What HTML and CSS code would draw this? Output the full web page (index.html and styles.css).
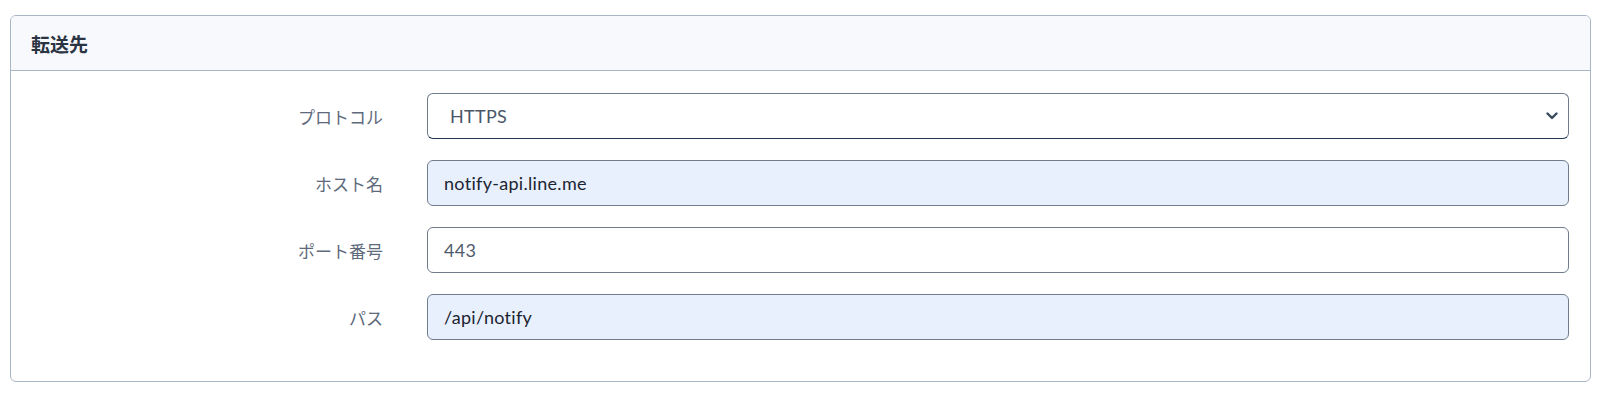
FILE: index.html
```html
<!DOCTYPE html>
<html lang="ja">
<head>
<meta charset="utf-8">
<link rel="stylesheet" href="styles.css">
</head>
<body>
<section class="card">
  <header class="card-header">転送先</header>
  <div class="card-body">
    <div class="row">
      <label class="label">プロトコル</label>
      <div class="select">
        <span class="select-value">HTTPS</span>
        <svg class="chev" width="12" height="8" viewBox="0 0 12 8"><path d="M1.5 1.5 L6 6 L10.5 1.5" fill="none" stroke="#3a4a5c" stroke-width="2.4" stroke-linecap="round" stroke-linejoin="round"/></svg>
      </div>
    </div>
    <div class="row">
      <label class="label">ホスト名</label>
      <div class="input filled">notify-api.line.me</div>
    </div>
    <div class="row">
      <label class="label">ポート番号</label>
      <div class="input muted">443</div>
    </div>
    <div class="row">
      <label class="label">パス</label>
      <div class="input filled">/api/notify</div>
    </div>
  </div>
</section>
</body>
</html>
```

FILE: styles.css
```css
* { box-sizing: border-box; }
html, body { margin: 0; background: #ffffff; }
body {
  padding: 15px 9px 0 10px;
  font-family: "Lato", "Noto Sans CJK JP", sans-serif;
}
.card {
  border: 1px solid #a9b6c6;
  border-radius: 6px;
  overflow: hidden;
}
.card-header {
  height: 55px;
  background: #f7f9fc;
  border-bottom: 1px solid #a9b6c6;
  padding: 0 20px;
  display: flex;
  align-items: center;
  font-family: "Noto Sans CJK JP", sans-serif;
  font-weight: 700;
  font-size: 19px;
  color: #2a3442;
}
.card-body {
  padding: 22px 21px 41px 0;
  display: flex;
  flex-direction: column;
  gap: 21px;
}
.row {
  display: grid;
  grid-template-columns: 372px 1fr;
  column-gap: 44px;
  align-items: center;
}
.label {
  text-align: right;
  font-family: "Noto Sans CJK JP", sans-serif;
  font-size: 17px;
  color: #5e6a7c;
}
.input, .select {
  height: 46px;
  border: 1px solid #707c8c;
  border-radius: 6px;
  display: flex;
  align-items: center;
  padding: 0 16px;
  font-size: 18px;
  letter-spacing: 0.3px;
  color: #1c2430;
}
.input.filled { background: #e8f0fd; }
.input.muted { color: #4f5b6b; }
.select {
  justify-content: space-between;
  padding: 0 10px 0 22px;
  color: #4a5668;
  border-bottom-color: #1f3552;
}
.chev { display: block; }
```
